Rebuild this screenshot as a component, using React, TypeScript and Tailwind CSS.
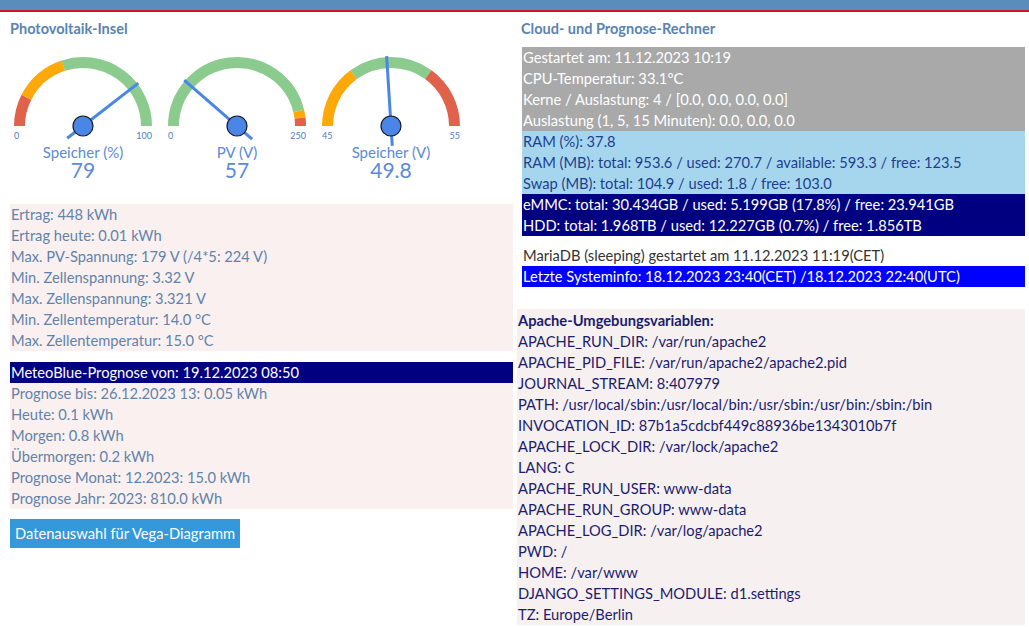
import React from "react";

type Band = { from: number; to: number; color: string };

interface GaugeProps {
  label: string;
  value: number;
  shown: string;
  min: number;
  max: number;
  bands: Band[];
}

const CX = 73;
const CY = 75;

function point(f: number, r: number) {
  const a = Math.PI * (1 - f);
  return [CX + r * Math.cos(a), CY - r * Math.sin(a)];
}

function arc(f1: number, f2: number, r: number) {
  const [x1, y1] = point(f1, r);
  const [x2, y2] = point(f2, r);
  return `M ${x1} ${y1} A ${r} ${r} 0 0 1 ${x2} ${y2}`;
}

function Gauge({ label, value, shown, min, max, bands }: GaugeProps) {
  const f = (value - min) / (max - min);
  const [tx, ty] = point(f, 70);
  const [bx, by] = point(f, -20);

  return (
    <div className="flex w-[146px] flex-col items-center">
      <svg width="146" height="96" viewBox="0 0 146 96">
        {bands.map((b, i) => (
          <path
            key={i}
            d={arc((b.from - min) / (max - min), (b.to - min) / (max - min), 63.5)}
            fill="none"
            stroke={b.color}
            strokeWidth="11"
          />
        ))}
        <line x1={bx} y1={by} x2={tx} y2={ty} stroke="#4a86e8" strokeWidth="3" />
        <circle cx={CX} cy={CY} r="10" fill="#4a86e8" stroke="#1a1a1a" strokeWidth="1.2" />
        <text x="4" y="88" fontSize="9" fill="#4a7dc4" fontFamily="Lato, sans-serif">
          {min}
        </text>
        <text x="142" y="88" fontSize="9" fill="#4a7dc4" textAnchor="end" fontFamily="Lato, sans-serif">
          {max}
        </text>
      </svg>
      <div className="-mt-[2px] text-[15px] leading-[15px] text-[#5b8ad6]">{label}</div>
      <div className="text-[21px] leading-[19px] text-[#5b8ad6]">{shown}</div>
    </div>
  );
}

const red = "#e0624a";
const orange = "#ffa80a";
const green = "#8bcb8e";

const pvLines = [
  "Ertrag: 448 kWh",
  "Ertrag heute: 0.01 kWh",
  "Max. PV-Spannung: 179 V (/4*5: 224 V)",
  "Min. Zellenspannung: 3.32 V",
  "Max. Zellenspannung: 3.321 V",
  "Min. Zellentemperatur: 14.0 °C",
  "Max. Zellentemperatur: 15.0 °C",
];

const forecastLines = [
  "Prognose bis: 26.12.2023 13: 0.05 kWh",
  "Heute: 0.1 kWh",
  "Morgen: 0.8 kWh",
  "Übermorgen: 0.2 kWh",
  "Prognose Monat: 12.2023: 15.0 kWh",
  "Prognose Jahr: 2023: 810.0 kWh",
];

const sysLines = [
  "Gestartet am: 11.12.2023 10:19",
  "CPU-Temperatur: 33.1°C",
  "Kerne / Auslastung: 4 / [0.0, 0.0, 0.0, 0.0]",
  "Auslastung (1, 5, 15 Minuten): 0.0, 0.0, 0.0",
];

const ramLines = [
  "RAM (%): 37.8",
  "RAM (MB): total: 953.6 / used: 270.7 / available: 593.3 / free: 123.5",
  "Swap (MB): total: 104.9 / used: 1.8 / free: 103.0",
];

const diskLines = [
  "eMMC: total: 30.434GB / used: 5.199GB (17.8%) / free: 23.941GB",
  "HDD: total: 1.968TB / used: 12.227GB (0.7%) / free: 1.856TB",
];

const envLines = [
  "APACHE_RUN_DIR: /var/run/apache2",
  "APACHE_PID_FILE: /var/run/apache2/apache2.pid",
  "JOURNAL_STREAM: 8:407979",
  "PATH: /usr/local/sbin:/usr/local/bin:/usr/sbin:/usr/bin:/sbin:/bin",
  "INVOCATION_ID: 87b1a5cdcbf449c88936be1343010b7f",
  "APACHE_LOCK_DIR: /var/lock/apache2",
  "LANG: C",
  "APACHE_RUN_USER: www-data",
  "APACHE_RUN_GROUP: www-data",
  "APACHE_LOG_DIR: /var/log/apache2",
  "PWD: /",
  "HOME: /var/www",
  "DJANGO_SETTINGS_MODULE: d1.settings",
  "TZ: Europe/Berlin",
];

export default function App() {
  return (
    <div className="h-[627px] w-[1029px] overflow-hidden bg-white font-['Lato',sans-serif] text-[14.7px] leading-[21px]">
      <div className="h-[10px] overflow-hidden bg-[#5a8dbb]">
        <div className="-mt-[25px] pl-[130px] text-[22px] font-bold leading-[26px] text-white">
          Systemübersicht (pv/sys)
        </div>
      </div>
      <div className="h-[2px] bg-[#d0161e]" />

      <div className="flex">
        <div className="w-[517px] pl-[10px] pr-[4px]">
          <h2 className="mt-[8px] text-[14.5px] font-bold leading-[18px] text-[#5a84b0]">Photovoltaik-Insel</h2>

          <div className="mt-[13px] flex gap-[8px]">
            <Gauge
              label="Speicher (%)"
              value={79}
              shown="79"
              min={0}
              max={100}
              bands={[
                { from: 0, to: 15, color: red },
                { from: 15, to: 40, color: orange },
                { from: 40, to: 100, color: green },
              ]}
            />
            <Gauge
              label="PV (V)"
              value={57}
              shown="57"
              min={0}
              max={250}
              bands={[
                { from: 0, to: 231, color: green },
                { from: 231, to: 240, color: orange },
                { from: 240, to: 250, color: red },
              ]}
            />
            <Gauge
              label="Speicher (V)"
              value={49.8}
              shown="49.8"
              min={45}
              max={55}
              bands={[
                { from: 45, to: 48, color: orange },
                { from: 48, to: 52, color: green },
                { from: 52, to: 55, color: red },
              ]}
            />
          </div>

          <div className="mt-[25px] bg-[#fbf0f0] text-[#5e84ab]">
            {pvLines.map((l) => (
              <div key={l} className="pl-[1px]">{l}</div>
            ))}
          </div>

          <div className="mt-[11px] bg-[#fbf0f0] text-[#5e84ab]">
            <div className="bg-[#000080] pl-[1px] text-white">MeteoBlue-Prognose von: 19.12.2023 08:50</div>
            {forecastLines.map((l) => (
              <div key={l} className="pl-[1px]">{l}</div>
            ))}
          </div>

          <button className="mt-[10px] h-[29px] bg-[#3498db] px-[5px] text-[14.7px] text-white">
            Datenauswahl für Vega-Diagramm
          </button>
        </div>

        <div className="w-[508px]">
          <h2 className="mt-[8px] pl-[4px] text-[14.5px] font-bold leading-[18px] text-[#5a84b0]">
            Cloud- und Prognose-Rechner
          </h2>

          <div className="ml-[5px] mt-[9px]">
            <div className="bg-[#a9a9a9] text-white">
              {sysLines.map((l) => (
                <div key={l} className="pl-[1px]">{l}</div>
              ))}
            </div>
            <div className="bg-[#a6d6ee] text-[#1e3f8f]">
              {ramLines.map((l) => (
                <div key={l} className="pl-[1px]">{l}</div>
              ))}
            </div>
            <div className="bg-[#000080] text-white">
              {diskLines.map((l) => (
                <div key={l} className="pl-[1px]">{l}</div>
              ))}
            </div>
            <div className="mt-[9px] pl-[1px] text-[#333333]">MariaDB (sleeping) gestartet am 11.12.2023 11:19(CET)</div>
            <div className="bg-[#0000ff] pl-[1px] text-white">
              Letzte Systeminfo: 18.12.2023 23:40(CET) /18.12.2023 22:40(UTC)
            </div>
          </div>

          <div className="mt-[22px] bg-[#f6f0f0] px-[1px] pt-[1px] text-[#1c1c6e]">
            <div className="font-bold">Apache-Umgebungsvariablen:</div>
            {envLines.map((l) => (
              <div key={l}>{l}</div>
            ))}
          </div>
        </div>
      </div>
    </div>
  );
}
